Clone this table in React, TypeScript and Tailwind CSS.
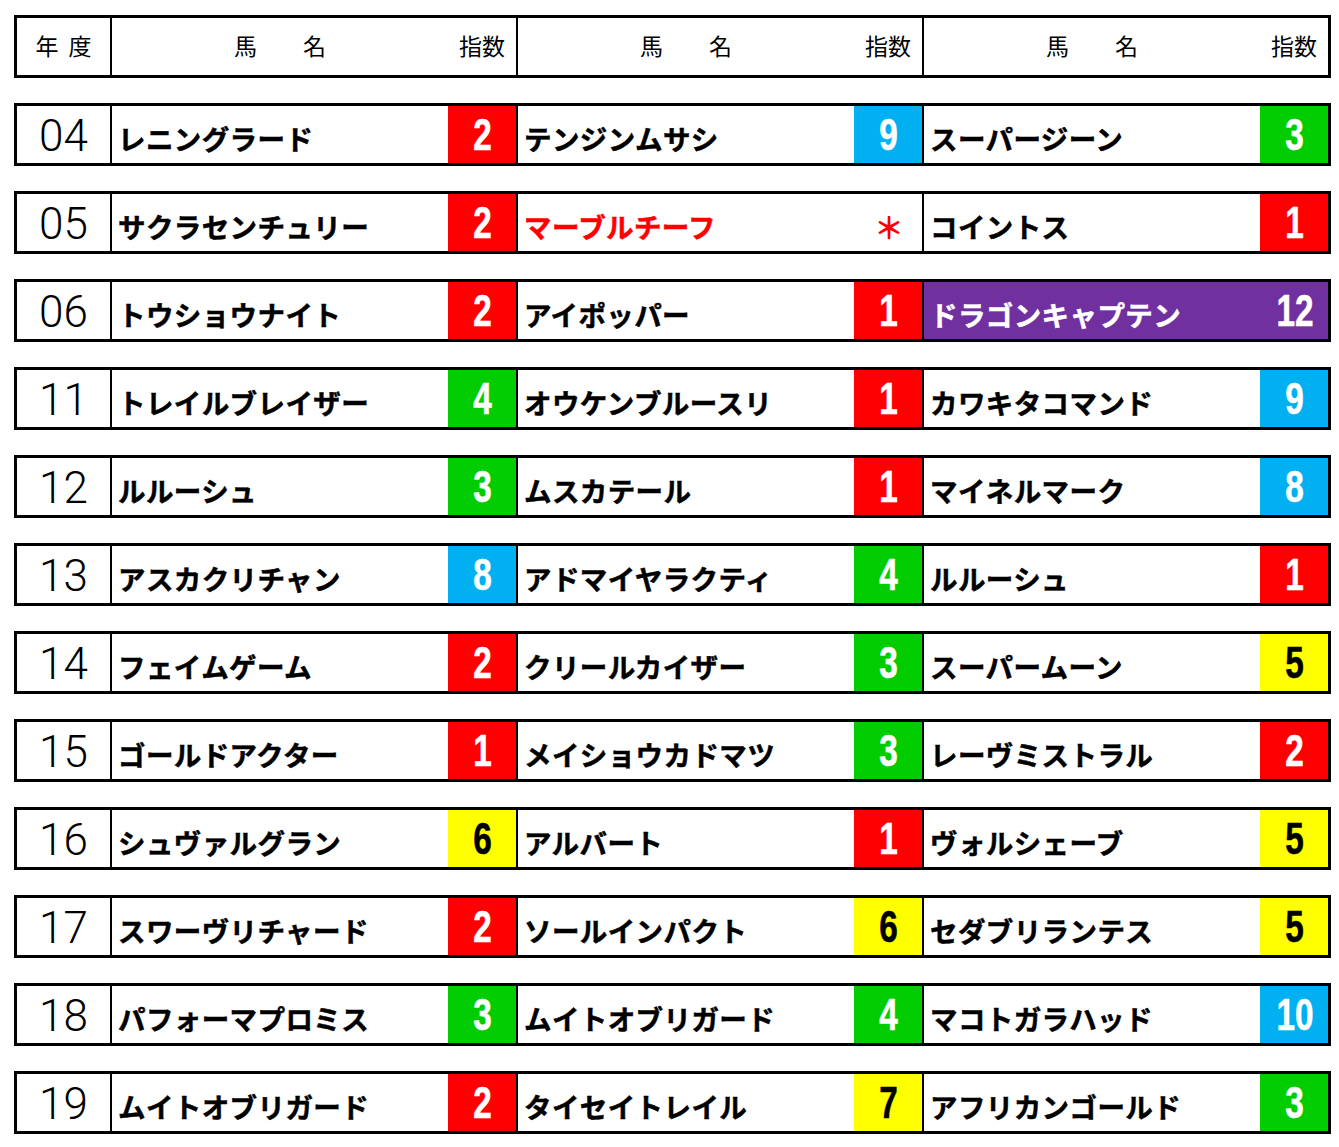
type Tone = 'red' | 'blue' | 'green' | 'yellow' | 'purple' | 'mark';

type Entry = {
  name: string;
  score: string;
  tone: Tone;
};

type Row = {
  year: string;
  horses: Entry[];
};

const rows: Row[] = [
  { year: '04', horses: [
    { name: 'レニングラード', score: '2', tone: 'red' },
    { name: 'テンジンムサシ', score: '9', tone: 'blue' },
    { name: 'スーパージーン', score: '3', tone: 'green' },
  ] },
  { year: '05', horses: [
    { name: 'サクラセンチュリー', score: '2', tone: 'red' },
    { name: 'マーブルチーフ', score: '＊', tone: 'mark' },
    { name: 'コイントス', score: '1', tone: 'red' },
  ] },
  { year: '06', horses: [
    { name: 'トウショウナイト', score: '2', tone: 'red' },
    { name: 'アイポッパー', score: '1', tone: 'red' },
    { name: 'ドラゴンキャプテン', score: '12', tone: 'purple' },
  ] },
  { year: '11', horses: [
    { name: 'トレイルブレイザー', score: '4', tone: 'green' },
    { name: 'オウケンブルースリ', score: '1', tone: 'red' },
    { name: 'カワキタコマンド', score: '9', tone: 'blue' },
  ] },
  { year: '12', horses: [
    { name: 'ルルーシュ', score: '3', tone: 'green' },
    { name: 'ムスカテール', score: '1', tone: 'red' },
    { name: 'マイネルマーク', score: '8', tone: 'blue' },
  ] },
  { year: '13', horses: [
    { name: 'アスカクリチャン', score: '8', tone: 'blue' },
    { name: 'アドマイヤラクティ', score: '4', tone: 'green' },
    { name: 'ルルーシュ', score: '1', tone: 'red' },
  ] },
  { year: '14', horses: [
    { name: 'フェイムゲーム', score: '2', tone: 'red' },
    { name: 'クリールカイザー', score: '3', tone: 'green' },
    { name: 'スーパームーン', score: '5', tone: 'yellow' },
  ] },
  { year: '15', horses: [
    { name: 'ゴールドアクター', score: '1', tone: 'red' },
    { name: 'メイショウカドマツ', score: '3', tone: 'green' },
    { name: 'レーヴミストラル', score: '2', tone: 'red' },
  ] },
  { year: '16', horses: [
    { name: 'シュヴァルグラン', score: '6', tone: 'yellow' },
    { name: 'アルバート', score: '1', tone: 'red' },
    { name: 'ヴォルシェーブ', score: '5', tone: 'yellow' },
  ] },
  { year: '17', horses: [
    { name: 'スワーヴリチャード', score: '2', tone: 'red' },
    { name: 'ソールインパクト', score: '6', tone: 'yellow' },
    { name: 'セダブリランテス', score: '5', tone: 'yellow' },
  ] },
  { year: '18', horses: [
    { name: 'パフォーマプロミス', score: '3', tone: 'green' },
    { name: 'ムイトオブリガード', score: '4', tone: 'green' },
    { name: 'マコトガラハッド', score: '10', tone: 'blue' },
  ] },
  { year: '19', horses: [
    { name: 'ムイトオブリガード', score: '2', tone: 'red' },
    { name: 'タイセイトレイル', score: '7', tone: 'yellow' },
    { name: 'アフリカンゴールド', score: '3', tone: 'green' },
  ] },
];

const scoreBg: Record<Tone, string> = {
  red: 'bg-[#ff0000] text-white',
  blue: 'bg-[#00b0f0] text-white',
  green: 'bg-[#00cc00] text-white',
  yellow: 'bg-[#ffff00] text-black',
  purple: 'bg-[#7030a0] text-white',
  mark: 'bg-white text-[#ff0000]',
};

const jp = "font-['Noto_Sans_CJK_JP','Noto_Sans',sans-serif]";

function HorseCell({ horse }: { horse: Entry }) {
  const nameTone =
    horse.tone === 'purple'
      ? 'bg-[#7030a0] text-white'
      : horse.tone === 'mark'
        ? 'text-[#ff0000]'
        : 'text-black';

  return (
    <div className="flex border-l-2 border-black">
      <div className={`flex w-[336px] items-center pl-[6px] pt-[8px] ${nameTone}`}>
        <span className={`${jp} text-[27.5px] font-bold leading-none tracking-[0.4px] whitespace-nowrap [-webkit-text-stroke:0.5px_currentColor]`}>
          {horse.name}
        </span>
      </div>
      <div className={`flex w-[68px] items-center justify-center ${scoreBg[horse.tone]}`}>
        {horse.tone === 'mark' ? (
          <span className={`${jp} pl-[2px] pt-[6px] text-[30px] font-bold leading-none`}>＊</span>
        ) : (
          <span className="inline-block translate-x-[1px] scale-x-[0.74] font-['Liberation_Sans',Arial,sans-serif] text-[45px] font-bold leading-none [-webkit-text-stroke:0.6px_currentColor]">
            {horse.score}
          </span>
        )}
      </div>
    </div>
  );
}

function HeaderCell() {
  return (
    <div className={`flex border-l-2 border-black ${jp} text-[23px] text-black`}>
      <div className="flex w-[336px] items-center justify-center pb-[3px]">
        <span className="whitespace-pre">馬　　名</span>
      </div>
      <div className="flex w-[68px] items-center justify-center pb-[3px]">
        <span>指数</span>
      </div>
    </div>
  );
}

export default function App() {
  return (
    <div className="min-h-screen bg-white pl-[14px] pt-[15px]">
      <div className="flex w-[1317px] flex-col gap-[25px]">
        {/* 見出し */}
        <div className="flex h-[63px] border-[3px] border-black">
          <div className={`flex w-[93px] items-center justify-center gap-[10px] pb-[3px] ${jp} text-[23px]`}>
            <span>年</span>
            <span>度</span>
          </div>
          <HeaderCell />
          <HeaderCell />
          <HeaderCell />
        </div>

        {rows.map((row) => (
          <div key={row.year} className="flex h-[63px] border-[3px] border-black">
            <div className="flex w-[93px] items-center justify-center pt-[2px] font-['Roboto','Lato',sans-serif] text-[44px] font-light leading-none text-black">
              {row.year}
            </div>
            {row.horses.map((horse, i) => (
              <HorseCell key={i} horse={horse} />
            ))}
          </div>
        ))}
      </div>
    </div>
  );
}
